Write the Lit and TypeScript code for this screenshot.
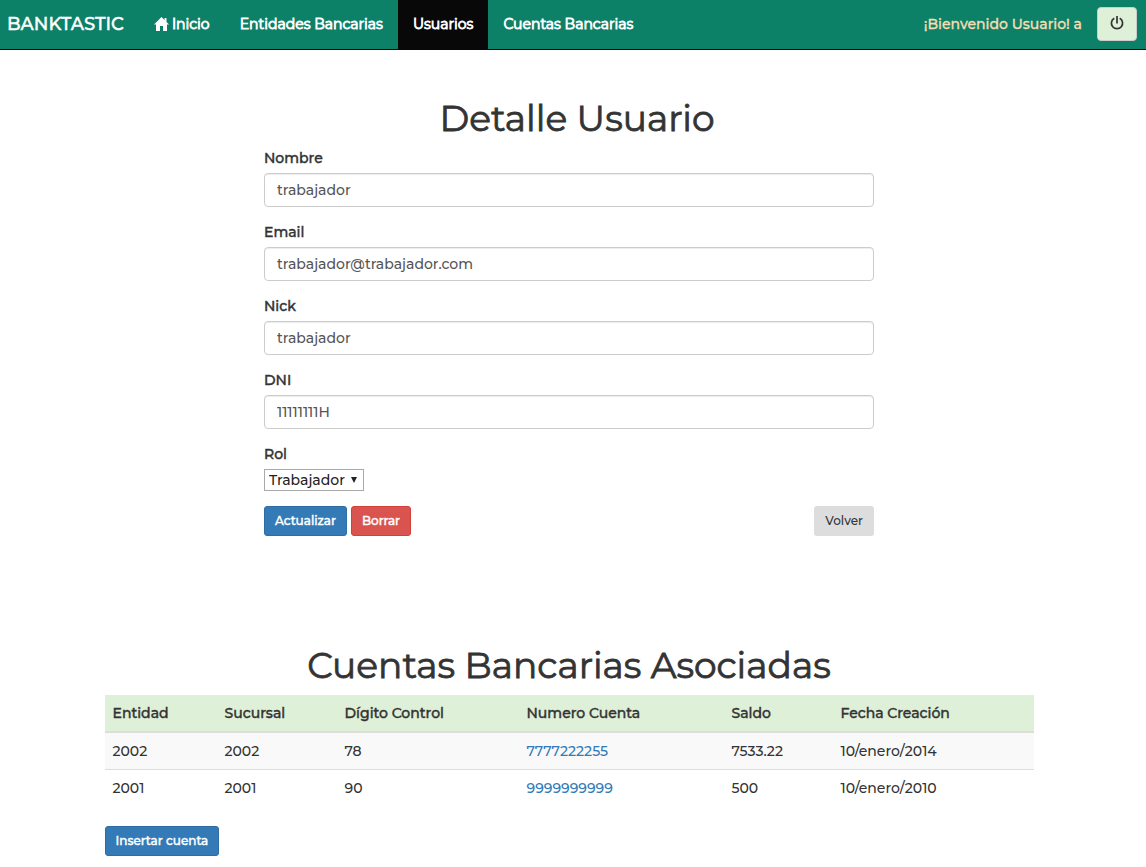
import { LitElement, html, css } from "lit";
import { customElement, state } from "lit/decorators.js";

interface Account {
  bank: string;
  branch: string;
  control: string;
  number: string;
  balance: string;
  created: string;
}

@customElement("app-root")
export class AppRoot extends LitElement {
  @state() private fields = [
    { id: "nombre", label: "Nombre", type: "text", value: "trabajador" },
    { id: "email", label: "Email", type: "email", value: "trabajador@trabajador.com" },
    { id: "nick", label: "Nick", type: "text", value: "trabajador" },
    { id: "dni", label: "DNI", type: "text", value: "11111111H" },
  ];

  @state() private accounts: Account[] = [
    { bank: "2002", branch: "2002", control: "78", number: "7777222255", balance: "7533.22", created: "10/enero/2014" },
    { bank: "2001", branch: "2001", control: "90", number: "9999999999", balance: "500", created: "10/enero/2010" },
  ];

  static styles = css`
    :host {
      display: block;
      background: #fff;
      color: #333;
      font: 500 14px/20px Montserrat, Inter, "Open Sans", sans-serif;
    }
    * { box-sizing: border-box; }
    a { color: #337ab7; text-decoration: none; }
    button, input, select { font: inherit; margin: 0; }
    .navbar {
      display: flex;
      align-items: center;
      height: 50px;
      padding-right: 9px;
      background: #0c8168;
      border-bottom: 1px solid #080808;
    }
    .brand {
      padding: 0 15px 2px 7px;
      color: #fff;
      font-size: 18px;
      -webkit-text-stroke: 0.4px currentColor;
    }
    .menu {
      display: flex;
      flex: 1;
      align-self: stretch;
      margin: 0;
      padding: 0;
      list-style: none;
    }
    .link {
      display: flex;
      align-items: center;
      height: 100%;
      padding: 0 15px 2px;
      color: #fff;
      white-space: nowrap;
    }
    .label, .table th, .primary, .danger { -webkit-text-stroke: 0.4px currentColor; }
    .link { font-weight: 400; -webkit-text-stroke: 0.8px currentColor; }
    .active { background: #080808; }
    .home { width: 15px; height: 14px; margin-right: 3px; fill: #fff; }
    .welcome { padding: 0 15px 2px 0; color: #f5deb3; -webkit-text-stroke: 0.3px currentColor; }
    .power {
      display: flex;
      justify-content: center;
      width: 40px;
      height: 34px;
      margin-bottom: 1px;
      padding: 8px 0;
      border: 1px solid #ccc;
      border-radius: 4px;
      background: #dff0d8;
    }
    .power svg { width: 14px; height: 14px; }
    .main { padding: 48px 8px 11px 0; }
    .form { width: 100%; max-width: 610px; margin: 0 auto; }
    .title {
      margin: 0 0 10px;
      font-size: 36px;
      line-height: 40px;
      font-weight: 400;
      -webkit-text-stroke: 0.8px currentColor;
      text-align: center;
    }
    .form .title { padding-left: 16px; }
    .group { margin-bottom: 15px; }
    .label { display: block; margin-bottom: 5px; }
    .input {
      display: block;
      width: 100%;
      height: 34px;
      padding: 6px 12px;
      color: #555;
      background: #fff;
      border: 1px solid #ccc;
      border-radius: 4px;
      box-shadow: inset 0 1px 1px rgba(0, 0, 0, 0.075);
    }
    .picker { position: relative; width: 100px; }
    .select {
      display: block;
      width: 100%;
      height: 22px;
      padding: 0 4px;
      color: #222;
      background: #fff;
      border: 1px solid #a9a9a9;
      border-radius: 0;
      line-height: 20px;
      appearance: none;
    }
    .arrow {
      position: absolute;
      top: 8px;
      right: 7px;
      width: 6px;
      height: 6px;
      pointer-events: none;
    }
    .actions { display: flex; gap: 4px; }
    .btn {
      height: 30px;
      padding: 0 10px;
      border: 1px solid transparent;
      border-radius: 3px;
      font-size: 12px;
      line-height: 18px;
      white-space: nowrap;
    }
    .primary { color: #fff; background: #337ab7; border-color: #2e6da4; }
    .danger { color: #fff; background: #d9534f; border-color: #d43f3a; }
    .plain { margin-left: auto; color: #333; background: #ddd; }
    .accounts { width: 100%; max-width: 929px; margin: 109px auto 0; }
    .table {
      width: 100%;
      margin-bottom: 20px;
      border-collapse: collapse;
      table-layout: fixed;
    }
    .table th, .table td { padding: 8px; text-align: left; }
    .table th { background: #dff0d8; border-bottom: 2px solid #ddd; font-weight: 500; }
    .table td { border-top: 1px solid #ddd; }
    .table tbody tr:nth-child(odd) { background: #f9f9f9; }
    .bank { width: 112px; }
    .branch { width: 120px; }
    .control { width: 182px; }
    .number { width: 205px; }
    .balance { width: 109px; }
    .created { width: 201px; }
  `;

  render() {
    return html`
      <nav class="navbar">
        <a class="brand" href="#">BANKTASTIC</a>
        <ul class="menu">
          <li>
            <a class="link" href="#">
              <svg class="home" viewBox="0 0 15 14" aria-hidden="true">
                <path d="M7.500 0 0 7.600h2V14h4V9h3v5h4V7.600h2L12.500 5V1h-2v2z" />
              </svg>Inicio</a>
          </li>
          <li><a class="link" href="#">Entidades Bancarias</a></li>
          <li><a class="link active" href="#" aria-current="page">Usuarios</a></li>
          <li><a class="link" href="#">Cuentas Bancarias</a></li>
        </ul>
        <span class="welcome">¡Bienvenido Usuario! a</span>
        <button class="power" type="button" aria-label="Salir">
          <svg viewBox="0 0 14 14" fill="none" stroke="#333" stroke-width="1.700" aria-hidden="true">
            <path d="M7 0v7.500M4.300 2.200a5.600 5.600 0 1 0 5.400 0" />
          </svg>
        </button>
      </nav>
      <main class="main">
        <form class="form" @submit=${(e: Event) => e.preventDefault()}>
          <h1 class="title">Detalle Usuario</h1>
          ${this.fields.map(
            (f) => html`<div class="group">
              <label class="label" for=${f.id}>${f.label}</label>
              <input class="input" id=${f.id} type=${f.type} .value=${f.value} />
            </div>`
          )}
          <div class="group">
            <label class="label" for="rol">Rol</label>
            <div class="picker">
              <select class="select" id="rol">
                <option selected>Trabajador</option>
              </select>
              <svg class="arrow" viewBox="0 0 6 6" fill="#222" aria-hidden="true"><path d="M0 0h6L3 6z" /></svg>
            </div>
          </div>
          <div class="actions">
            <button class="btn primary" type="submit">Actualizar</button>
            <button class="btn danger" type="button">Borrar</button>
            <button class="btn plain" type="button">Volver</button>
          </div>
        </form>
        <section class="accounts">
          <h1 class="title">Cuentas Bancarias Asociadas</h1>
          <table class="table">
            <colgroup>
              <col class="bank" /><col class="branch" /><col class="control" />
              <col class="number" /><col class="balance" /><col class="created" />
            </colgroup>
            <thead>
              <tr>
                <th>Entidad</th><th>Sucursal</th><th>Dígito Control</th>
                <th>Numero Cuenta</th><th>Saldo</th><th>Fecha Creación</th>
              </tr>
            </thead>
            <tbody>
              ${this.accounts.map(
                (a) => html`<tr>
                  <td>${a.bank}</td><td>${a.branch}</td><td>${a.control}</td>
                  <td><a href="#">${a.number}</a></td><td>${a.balance}</td><td>${a.created}</td>
                </tr>`
              )}
            </tbody>
          </table>
          <button class="btn primary" type="button">Insertar cuenta</button>
        </section>
      </main>
    `;
  }
}
